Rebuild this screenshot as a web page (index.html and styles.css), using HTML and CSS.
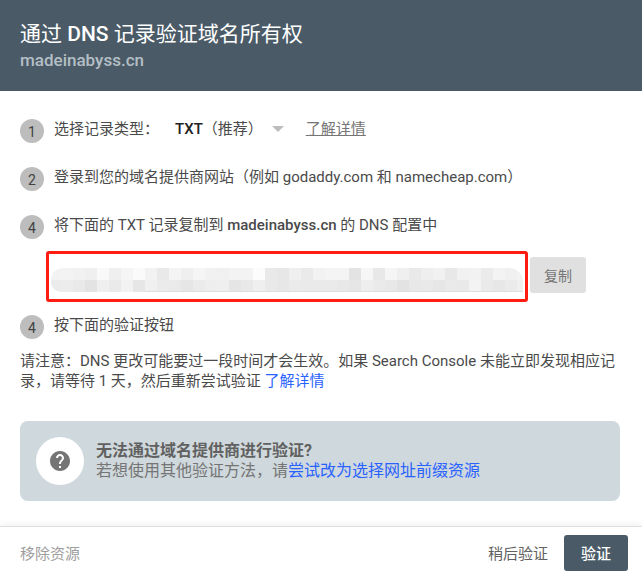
FILE: index.html
```html
<!DOCTYPE html>
<html lang="zh-CN">
<head>
    <meta charset="UTF-8">
    <meta name="viewport" content="width=device-width, initial-scale=1.0">
    <title>通过 DNS 记录验证域名所有权</title>
    <link rel="stylesheet" href="styles.css">
</head>
<body>

    <div class="dialog">
        <div class="dialog-header">
            <h2>通过 <b>DNS</b> 记录验证域名所有权</h2>
            <div class="domain">madeinabyss.cn</div>
        </div>

        <div class="dialog-body">
            <div class="step">
                <span class="step-num">1</span>
                <span class="step-label">选择记录类型：</span>
                <span class="record-type"><b>TXT</b>（推荐）</span>
                <span class="caret"></span>
                <a class="plain-link" href="#">了解详情</a>
            </div>
            <div class="step">
                <span class="step-num">2</span>
                <span>登录到您的域名提供商网站（例如 godaddy.com 和 namecheap.com）</span>
            </div>
            <div class="step">
                <span class="step-num">4</span>
                <span>将下面的 TXT 记录复制到 <b>madeinabyss.cn</b> 的 DNS 配置中</span>
            </div>

            <div class="record-row">
                <div class="record-box">
                    <!-- pixelated record value -->
                    <div class="mosaic">
                        <svg width="472" height="24" viewBox="2 0 472 24" shape-rendering="crispEdges">
                            <g fill="#f2f2f2">
                                <rect x="0" y="0" width="12" height="12" fill="#f2f2f2"/>
                                <rect x="12" y="0" width="12" height="12" fill="#f3f3f3"/>
                                <rect x="24" y="0" width="12" height="12" fill="#f1f1f1"/>
                                <rect x="36" y="0" width="12" height="12" fill="#efefef"/>
                                <rect x="48" y="0" width="12" height="12" fill="#f9f9f9"/>
                                <rect x="60" y="0" width="12" height="12" fill="#efefef"/>
                                <rect x="72" y="0" width="12" height="12" fill="#f5f5f5"/>
                                <rect x="84" y="0" width="12" height="12" fill="#fafafa"/>
                                <rect x="96" y="0" width="12" height="12" fill="#f2f2f2"/>
                                <rect x="108" y="0" width="12" height="12" fill="#e9e9e9"/>
                                <rect x="120" y="0" width="12" height="12" fill="#f4f4f4"/>
                                <rect x="132" y="0" width="12" height="12" fill="#efefef"/>
                                <rect x="144" y="0" width="12" height="12" fill="#f5f5f5"/>
                                <rect x="156" y="0" width="12" height="12" fill="#f1f1f1"/>
                                <rect x="168" y="0" width="12" height="12" fill="#f0f0f0"/>
                                <rect x="180" y="0" width="12" height="12" fill="#f3f3f3"/>
                                <rect x="192" y="0" width="12" height="12" fill="#f3f3f3"/>
                                <rect x="204" y="0" width="12" height="12" fill="#fcfcfc"/>
                                <rect x="216" y="0" width="12" height="12" fill="#e9e9e9"/>
                                <rect x="228" y="0" width="12" height="12" fill="#e7e7e7"/>
                                <rect x="240" y="0" width="12" height="12" fill="#efefef"/>
                                <rect x="252" y="0" width="12" height="12" fill="#eaeaea"/>
                                <rect x="264" y="0" width="12" height="12" fill="#f2f2f2"/>
                                <rect x="276" y="0" width="12" height="12" fill="#f4f4f4"/>
                                <rect x="288" y="0" width="12" height="12" fill="#f4f4f4"/>
                                <rect x="300" y="0" width="12" height="12" fill="#e3e3e3"/>
                                <rect x="312" y="0" width="12" height="12" fill="#f6f6f6"/>
                                <rect x="324" y="0" width="12" height="12" fill="#e8e8e8"/>
                                <rect x="336" y="0" width="12" height="12" fill="#f5f5f5"/>
                                <rect x="348" y="0" width="12" height="12" fill="#efefef"/>
                                <rect x="360" y="0" width="12" height="12" fill="#e9e9e9"/>
                                <rect x="372" y="0" width="12" height="12" fill="#eeeeee"/>
                                <rect x="384" y="0" width="12" height="12" fill="#f1f1f1"/>
                                <rect x="396" y="0" width="12" height="12" fill="#e8e8e8"/>
                                <rect x="408" y="0" width="12" height="12" fill="#f1f1f1"/>
                                <rect x="420" y="0" width="12" height="12" fill="#f2f2f2"/>
                                <rect x="432" y="0" width="12" height="12" fill="#ebebeb"/>
                                <rect x="444" y="0" width="12" height="12" fill="#f3f3f3"/>
                                <rect x="456" y="0" width="12" height="12" fill="#f0f0f0"/>
                                <rect x="468" y="0" width="12" height="12" fill="#f2f2f2"/>
                                <rect x="0" y="12" width="12" height="12" fill="#ebebeb"/>
                                <rect x="12" y="12" width="12" height="12" fill="#ececec"/>
                                <rect x="24" y="12" width="12" height="12" fill="#e9e9e9"/>
                                <rect x="36" y="12" width="12" height="12" fill="#e3e3e3"/>
                                <rect x="48" y="12" width="12" height="12" fill="#efefef"/>
                                <rect x="60" y="12" width="12" height="12" fill="#eaeaea"/>
                                <rect x="72" y="12" width="12" height="12" fill="#f2f2f2"/>
                                <rect x="84" y="12" width="12" height="12" fill="#e6e6e6"/>
                                <rect x="96" y="12" width="12" height="12" fill="#f0f0f0"/>
                                <rect x="108" y="12" width="12" height="12" fill="#ebebeb"/>
                                <rect x="120" y="12" width="12" height="12" fill="#eaeaea"/>
                                <rect x="132" y="12" width="12" height="12" fill="#e6e6e6"/>
                                <rect x="144" y="12" width="12" height="12" fill="#ebebeb"/>
                                <rect x="156" y="12" width="12" height="12" fill="#eeeeee"/>
                                <rect x="168" y="12" width="12" height="12" fill="#efefef"/>
                                <rect x="180" y="12" width="12" height="12" fill="#e5e5e5"/>
                                <rect x="192" y="12" width="12" height="12" fill="#e9e9e9"/>
                                <rect x="204" y="12" width="12" height="12" fill="#efefef"/>
                                <rect x="216" y="12" width="12" height="12" fill="#e9e9e9"/>
                                <rect x="228" y="12" width="12" height="12" fill="#e7e7e7"/>
                                <rect x="240" y="12" width="12" height="12" fill="#ebebeb"/>
                                <rect x="252" y="12" width="12" height="12" fill="#eaeaea"/>
                                <rect x="264" y="12" width="12" height="12" fill="#eaeaea"/>
                                <rect x="276" y="12" width="12" height="12" fill="#eaeaea"/>
                                <rect x="288" y="12" width="12" height="12" fill="#e8e8e8"/>
                                <rect x="300" y="12" width="12" height="12" fill="#e6e6e6"/>
                                <rect x="312" y="12" width="12" height="12" fill="#eeeeee"/>
                                <rect x="324" y="12" width="12" height="12" fill="#eaeaea"/>
                                <rect x="336" y="12" width="12" height="12" fill="#e8e8e8"/>
                                <rect x="348" y="12" width="12" height="12" fill="#e3e3e3"/>
                                <rect x="360" y="12" width="12" height="12" fill="#e8e8e8"/>
                                <rect x="372" y="12" width="12" height="12" fill="#e9e9e9"/>
                                <rect x="384" y="12" width="12" height="12" fill="#e6e6e6"/>
                                <rect x="396" y="12" width="12" height="12" fill="#eaeaea"/>
                                <rect x="408" y="12" width="12" height="12" fill="#e9e9e9"/>
                                <rect x="420" y="12" width="12" height="12" fill="#f3f3f3"/>
                                <rect x="432" y="12" width="12" height="12" fill="#eaeaea"/>
                                <rect x="444" y="12" width="12" height="12" fill="#e7e7e7"/>
                                <rect x="456" y="12" width="12" height="12" fill="#ebebeb"/>
                                <rect x="468" y="12" width="12" height="12" fill="#f0f0f0"/>
                                <rect x="96" y="23" width="378" height="1" fill="#dddddd"/>
                            </g>
                        </svg>
                    </div>
                </div>
                <button class="copy-btn">复制</button>
            </div>

            <div class="step step-last">
                <span class="step-num">4</span>
                <span>按下面的验证按钮</span>
            </div>

            <p class="note">请注意：DNS 更改可能要过一段时间才会生效。如果 Search Console 未能立即发现相应记录，请等待 1 天，然后重新尝试验证 <a href="#">了解详情</a></p>

            <div class="info-box">
                <div class="info-icon">
                    <svg width="24" height="24" viewBox="0 0 24 24"><path fill="#757575" d="M12 2C6.48 2 2 6.48 2 12s4.48 10 10 10 10-4.48 10-10S17.52 2 12 2zm1 17h-2v-2h2v2zm2.07-7.75l-.9.92C13.45 12.9 13 13.5 13 15h-2v-.5c0-1.1.45-2.1 1.17-2.83l1.24-1.26c.37-.36.59-.86.59-1.41 0-1.1-.9-2-2-2s-2 .9-2 2H8c0-2.21 1.79-4 4-4s4 1.79 4 4c0 .88-.36 1.68-.93 2.25z"/></svg>
                </div>
                <div class="info-text">
                    <strong>无法通过域名提供商进行验证?</strong>
                    <div>若想使用其他验证方法，请<a href="#">尝试改为选择网址前缀资源</a></div>
                </div>
            </div>
        </div>

        <div class="dialog-footer">
            <a class="remove-link" href="#">移除资源</a>
            <a class="later-link" href="#">稍后验证</a>
            <button class="verify-btn">验证</button>
        </div>
    </div>

</body>
</html>
```

FILE: styles.css
```css
body {
    font-family: Roboto, "Noto Sans CJK SC", sans-serif;
    margin: 0;
    background-color: #fff;
    color: #4a4a4a;
    overflow: hidden;
}
a {
    text-decoration: none;
}
.dialog {
    display: flex;
    flex-direction: column;
    height: 578px;
}
.dialog-header {
    background-color: #4a5b67;
    height: 91px;
    box-sizing: border-box;
    padding: 20px 20px 0;
    color: white;
}
.dialog-header h2 {
    margin: 0;
    font-size: 21px;
    font-weight: 400;
    line-height: 28px;
}
.dialog-header b {
    font-weight: 500;
}
.domain {
    color: #b4bec5;
    font-size: 17px;
    font-weight: 500;
    line-height: 24px;
}
.dialog-body {
    flex: 1;
    padding: 28px 22px 0 20px;
    font-size: 15px;
}
.step {
    display: flex;
    align-items: center;
    height: 24px;
    margin-bottom: 24px;
    line-height: 20px;
}
.step b {
    font-weight: 500;
}
.step > span:nth-child(2),
.step > .step-label {
    position: relative;
    top: -2px;
}
.step-num {
    flex: none;
    width: 24px;
    height: 24px;
    margin-right: 10px;
    border-radius: 50%;
    background-color: #bdbdbd;
    color: #424242;
    font-size: 14px;
    line-height: 26px;
    text-align: center;
}
.record-type {
    margin-left: 16px;
    position: relative;
    top: -2px;
}
.record-type b {
    font-weight: 500;
    color: #212121;
}
.caret {
    width: 0;
    height: 0;
    margin: 0 22px 0 9px;
    border-left: 6px solid transparent;
    border-right: 6px solid transparent;
    border-top: 6px solid #bdbdbd;
    position: relative;
    top: -2px;
}
.plain-link {
    color: #757575;
    text-decoration: underline;
    position: relative;
    top: -2px;
}
.record-row {
    display: flex;
    align-items: flex-start;
    margin: -12px 0 13px 26px;
}
.record-box {
    box-sizing: border-box;
    width: 482px;
    height: 51px;
    padding: 14px 2px 0;
    border: 3px solid #ff1c10;
    border-radius: 3px;
}
.mosaic {
    width: 472px;
    height: 24px;
    border-radius: 12px 14px 0 10px;
    overflow: hidden;
}
.mosaic svg {
    display: block;
}
.copy-btn {
    width: 56px;
    height: 36px;
    margin: 6px 0 0 2px;
    padding: 0;
    border: none;
    border-radius: 3px;
    background-color: #e0e0e0;
    color: #757575;
    font-family: inherit;
    font-size: 14px;
}
.step-last {
    margin-bottom: 12px;
}
.note {
    margin: 0 0 30px;
    line-height: 20px;
}
.note a {
    color: #2962ff;
}
.info-box {
    display: flex;
    align-items: center;
    height: 80px;
    padding: 0 16px;
    border-radius: 8px;
    background-color: #cfd8dc;
    color: #757575;
    font-size: 16px;
    line-height: 20px;
}
.info-icon {
    display: flex;
    align-items: center;
    justify-content: center;
    flex: none;
    width: 48px;
    height: 48px;
    margin-right: 12px;
    border-radius: 50%;
    background-color: white;
}
.info-text strong {
    font-weight: 700;
    color: #616161;
}
.info-text a {
    color: #2962ff;
}
.dialog-footer {
    display: flex;
    align-items: center;
    height: 52px;
    box-sizing: border-box;
    padding: 0 14px 0 20px;
    border-top: 1px solid #e0e0e0;
    box-shadow: 0 -2px 6px rgba(0, 0, 0, 0.06);
    font-size: 15px;
}
.remove-link {
    color: #9e9e9e;
    margin-right: auto;
}
.later-link {
    color: #616161;
    margin-right: 16px;
}
.verify-btn {
    width: 64px;
    height: 36px;
    padding: 0;
    border: none;
    border-radius: 3px;
    background-color: #4a5b67;
    color: white;
    font-family: inherit;
    font-size: 15px;
    font-weight: 500;
}
```
